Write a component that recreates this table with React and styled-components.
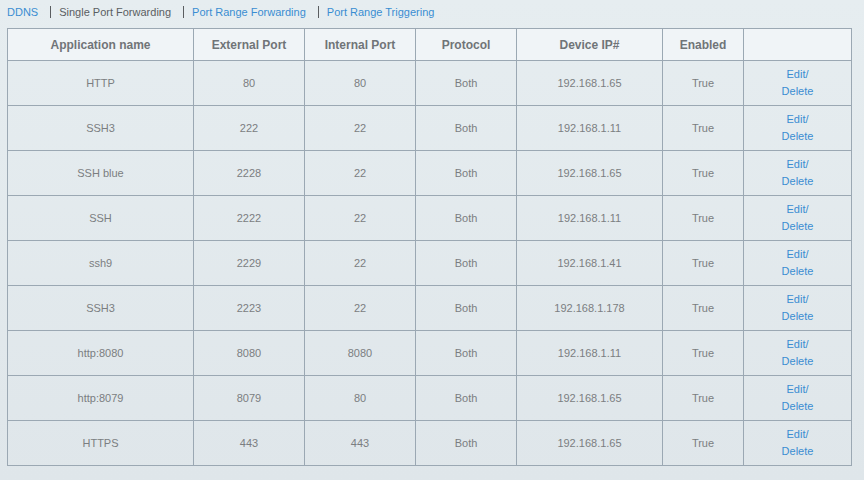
import styled, { createGlobalStyle } from "styled-components";

const GlobalStyle = createGlobalStyle`
  html, body {
    margin: 0;
    padding: 0;
  }
  body {
    width: 864px;
    height: 480px;
    overflow: hidden;
    background: linear-gradient(180deg, #e6edf0 0%, #dfe6ea 100%);
    font-family: "Liberation Sans", Arial, sans-serif;
  }
`;

const rows = [
  { name: "HTTP", ext: "80", int: "80", proto: "Both", ip: "192.168.1.65", enabled: "True" },
  { name: "SSH3", ext: "222", int: "22", proto: "Both", ip: "192.168.1.11", enabled: "True" },
  { name: "SSH blue", ext: "2228", int: "22", proto: "Both", ip: "192.168.1.65", enabled: "True" },
  { name: "SSH", ext: "2222", int: "22", proto: "Both", ip: "192.168.1.11", enabled: "True" },
  { name: "ssh9", ext: "2229", int: "22", proto: "Both", ip: "192.168.1.41", enabled: "True" },
  { name: "SSH3", ext: "2223", int: "22", proto: "Both", ip: "192.168.1.178", enabled: "True" },
  { name: "http:8080", ext: "8080", int: "8080", proto: "Both", ip: "192.168.1.11", enabled: "True" },
  { name: "http:8079", ext: "8079", int: "80", proto: "Both", ip: "192.168.1.65", enabled: "True" },
  { name: "HTTPS", ext: "443", int: "443", proto: "Both", ip: "192.168.1.65", enabled: "True" },
];

const columns = [
  { label: "Application name", width: 186 },
  { label: "External Port", width: 111 },
  { label: "Internal Port", width: 111 },
  { label: "Protocol", width: 101 },
  { label: "Device IP#", width: 146 },
  { label: "Enabled", width: 81 },
  { label: "", width: 108 },
];

const tabs = [
  { label: "DDNS", active: false },
  { label: "Single Port Forwarding", active: true },
  { label: "Port Range Forwarding", active: false },
  { label: "Port Range Triggering", active: false },
];

function App() {
  return (
    <Page>
      <GlobalStyle />
      <TabBar>
        {tabs.map((t, i) => (
          <TabItem key={t.label}>
            {i > 0 && <Separator />}
            <Tab $active={t.active}>{t.label}</Tab>
          </TabItem>
        ))}
      </TabBar>
      <Table>
        <colgroup>
          {columns.map((c, i) => (
            <col key={i} style={{ width: c.width }} />
          ))}
        </colgroup>
        <thead>
          <tr>
            {columns.map((c, i) => (
              <HeadCell key={i}>{c.label}</HeadCell>
            ))}
          </tr>
        </thead>
        <tbody>
          {rows.map((r, i) => (
            <Row key={i}>
              <Cell>{r.name}</Cell>
              <Cell>{r.ext}</Cell>
              <Cell>{r.int}</Cell>
              <Cell>{r.proto}</Cell>
              <Cell>{r.ip}</Cell>
              <Cell>{r.enabled}</Cell>
              <Cell>
                <ActionLink href="#">Edit/</ActionLink>
                <br />
                <ActionLink href="#">Delete</ActionLink>
              </Cell>
            </Row>
          ))}
        </tbody>
      </Table>
    </Page>
  );
}

const Page = styled.div`
  padding: 0 7px;
`;

const TabBar = styled.div`
  display: flex;
  align-items: center;
  height: 24px;
  margin-bottom: 4px;
  font-size: 11px;
`;

const TabItem = styled.div`
  display: flex;
  align-items: center;
`;

const Separator = styled.span`
  display: inline-block;
  width: 1px;
  height: 12px;
  background: #5a5d60;
  margin: 0 8px 0 12px;
`;

const Tab = styled.a`
  color: ${(p) => (p.$active ? "#5a5e62" : "#3a8dd2")};
  text-decoration: none;
  cursor: pointer;
`;

const Table = styled.table`
  width: 845px;
  table-layout: fixed;
  border-collapse: collapse;
  border: 1px solid #9ba8b3;
`;

const HeadCell = styled.th`
  height: 31px;
  padding: 0;
  background: #f0f4f7;
  border: 1px solid #9ba8b3;
  color: #707478;
  font-size: 12px;
  font-weight: bold;
  text-align: center;
  vertical-align: middle;
`;

const Row = styled.tr`
  height: 45px;
`;

const Cell = styled.td`
  padding: 0;
  border: 1px solid #9ba8b3;
  color: #7b7e81;
  font-size: 11px;
  line-height: 17px;
  text-align: center;
  vertical-align: middle;
`;

const ActionLink = styled.a`
  color: #3a8dd2;
  text-decoration: none;
`;

export default App;
